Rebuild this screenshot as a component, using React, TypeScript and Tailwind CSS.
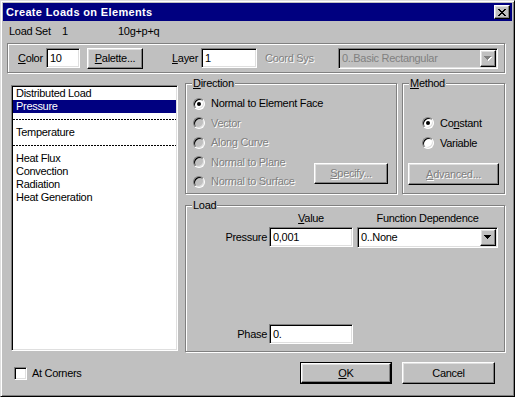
import type { ReactNode } from "react"

const raised =
    "border border-t-white border-l-white border-b-black border-r-black shadow-[inset_-1px_-1px_0_#808080,inset_1px_1px_0_#dfdfdf]"
const sunken =
    "border border-t-[#808080] border-l-[#808080] border-b-white border-r-white shadow-[inset_1px_1px_0_#000,inset_-1px_-1px_0_#dfdfdf]"
const grayText = "text-[#808080] [text-shadow:1px_1px_0_#fff]"

function Group({ label, className, children }: { label?: ReactNode; className?: string; children?: ReactNode }) {
    return (
        <div className={`relative border border-[#808080] shadow-[inset_1px_1px_0_#fff,1px_1px_0_#fff] ${className ?? ""}`}>
            {label && (
                <span className="absolute -top-[7px] left-[6px] bg-[#c0c0c0] px-[1px] leading-[13px]">{label}</span>
            )}
            {children}
        </div>
    )
}

function Radio({ checked, disabled }: { checked?: boolean; disabled?: boolean }) {
    return (
        <span
            className={`w-[12px] h-[12px] shrink-0 rounded-full flex items-center justify-center ${sunken} ${disabled ? "bg-[#c0c0c0]" : "bg-white"}`}
        >
            {checked && <span className="w-[4px] h-[4px] rounded-full bg-black" />}
        </span>
    )
}

function RadioRow({ label, checked, disabled, h = "h-[19.5px]" }: { label: ReactNode; checked?: boolean; disabled?: boolean; h?: string }) {
    return (
        <div className={`${h} flex items-center gap-[6px]`}>
            <Radio checked={checked} disabled={disabled} />
            <span className={disabled ? grayText : ""}>{label}</span>
        </div>
    )
}

function ArrowBtn({ disabled }: { disabled?: boolean }) {
    const d = "M0 0h7v1H0zM1 1h5v1H1zM2 2h3v1H2zM3 3h1v1H3z"
    return (
        <span className={`${raised} w-[16px] h-full shrink-0 bg-[#c0c0c0] flex items-center justify-center`}>
            <svg width="8" height="5" viewBox="0 0 8 5" shapeRendering="crispEdges">
                {disabled && <path d={d} fill="#fff" transform="translate(1 1)" />}
                <path d={d} fill={disabled ? "#808080" : "#000"} />
            </svg>
        </span>
    )
}

function Button({ children, className }: { children: ReactNode; className?: string }) {
    return (
        <div className={`${raised} bg-[#c0c0c0] flex items-center justify-center ${className ?? ""}`}>{children}</div>
    )
}

function Dashes() {
    return (
        <div className="h-[13px] flex items-center">
            <div className="w-full h-px bg-[repeating-linear-gradient(90deg,#000_0_2px,transparent_2px_3px)]" />
        </div>
    )
}

export default function App() {
    return (
        <div className="w-[515px] h-[397px] bg-[#c0c0c0] font-['Liberation_Sans',Arial,sans-serif] text-[11px] leading-[13px] tracking-[-0.3px] text-black whitespace-nowrap select-none">
            <div className="w-full h-full flex flex-col p-[2px] border border-t-[#dfdfdf] border-l-[#dfdfdf] border-b-black border-r-black shadow-[inset_1px_1px_0_#fff,inset_-1px_-1px_0_#808080]">
                {/* Title bar */}
                <div className="h-[18px] shrink-0 bg-[#000080] flex items-center pl-[3px] pr-[2px]">
                    <span className="flex-1 text-white font-bold tracking-[0.35px]">Create Loads on Elements</span>
                    <div className={`${raised} w-[16px] h-[14px] bg-[#c0c0c0] flex items-center justify-center`}>
                        <svg width="8" height="7" viewBox="0 0 8 7" shapeRendering="crispEdges">
                            <path
                                d="M0 0h2v1H0zM6 0h2v1H6zM1 1h2v1H1zM5 1h2v1H5zM2 2h4v1H2zM3 3h2v1H3zM2 4h4v1H2zM1 5h2v1H1zM5 5h2v1H5zM0 6h2v1H0zM6 6h2v1H6z"
                                fill="#000"
                            />
                        </svg>
                    </div>
                </div>

                <div className="flex flex-col pl-[4px]">
                    {/* Load set */}
                    <div className="mt-[4px] h-[13px] flex">
                        <span className="w-[55px] pl-[2px]">Load Set</span>
                        <span className="w-[56px]">1</span>
                        <span>10g+p+q</span>
                    </div>

                    {/* Color / layer */}
                    <Group className="mt-[5px] w-[498px] h-[30px] flex items-center pl-[10px]">
                        <span className="w-[28px]">
                            <u>C</u>olor
                        </span>
                        <div className={`${sunken} w-[34px] h-[20px] bg-white pl-[3px] flex items-center`}>10</div>
                        <Button className="ml-[7px] w-[56px] h-[21px]">
                            <span>
                                <u>P</u>alette...
                            </span>
                        </Button>
                        <span className="ml-[29px] w-[29px]">
                            <u>L</u>ayer
                        </span>
                        <div className={`${sunken} w-[56px] h-[20px] bg-white pl-[3px] flex items-center`}>1</div>
                        <span className={`ml-[8px] w-[73px] ${grayText}`}>Coord Sys</span>
                        <div className={`${sunken} w-[160px] h-[21px] bg-[#c0c0c0] flex p-[1px]`}>
                            <span className="flex-1 pl-[2px] flex items-center text-[#808080]">0..Basic Rectangular</span>
                            <ArrowBtn disabled />
                        </div>
                    </Group>

                    {/* Main area */}
                    <div className="mt-[10px] flex items-start">
                        <div className={`${sunken} ml-[4px] mt-[2px] w-[167px] h-[266px] bg-white p-[1px] flex flex-col`}>
                            <div className="h-[13px] pl-[3px]">Distributed Load</div>
                            <div className="h-[13px] pl-[3px] bg-[#000080] text-white">Pressure</div>
                            <Dashes />
                            <div className="h-[13px] pl-[3px]">Temperature</div>
                            <Dashes />
                            <div className="h-[13px] pl-[3px]">Heat Flux</div>
                            <div className="h-[13px] pl-[3px]">Convection</div>
                            <div className="h-[13px] pl-[3px]">Radiation</div>
                            <div className="h-[13px] pl-[3px]">Heat Generation</div>
                        </div>

                        <div className="ml-[7px] w-[320px] flex flex-col">
                            <div className="flex gap-[5px]">
                                <Group
                                    label={
                                        <>
                                            <u>D</u>irection
                                        </>
                                    }
                                    className="w-[212px] h-[111px] flex flex-col pt-[10px] pl-[7px] pr-[8px]"
                                >
                                    <RadioRow label="Normal to Element Face" checked />
                                    <RadioRow label="Vector" disabled />
                                    <RadioRow label="Along Curve" disabled />
                                    <div className="flex items-center">
                                        <div className="flex flex-col">
                                            <RadioRow label="Normal to Plane" disabled />
                                            <RadioRow label="Normal to Surface" disabled />
                                        </div>
                                        <Button className="ml-auto mt-[3px] w-[74px] h-[21px]">
                                            <span className={grayText}>
                                                <u>S</u>pecify...
                                            </span>
                                        </Button>
                                    </div>
                                </Group>

                                <Group
                                    label={
                                        <>
                                            <u>M</u>ethod
                                        </>
                                    }
                                    className="w-[103px] h-[111px] flex flex-col"
                                >
                                    <div className="pt-[29px] pl-[19px]">
                                        <RadioRow
                                            h="h-[20px]"
                                            checked
                                            label={
                                                <>
                                                    Co<u>n</u>stant
                                                </>
                                            }
                                        />
                                        <RadioRow h="h-[20px]" label="Variable" />
                                    </div>
                                    <Button className="mt-auto mb-[8px] ml-[5px] w-[91px] h-[22px]">
                                        <span className={grayText}>
                                            <u>A</u>dvanced...
                                        </span>
                                    </Button>
                                </Group>
                            </div>

                            <Group label="Load" className="mt-[11px] h-[147px] flex flex-col pt-[6px] pb-[7px]">
                                <div className="h-[13px] flex">
                                    <span className="w-[83px]" />
                                    <span className="w-[84px] text-center">
                                        <u>V</u>alue
                                    </span>
                                    <span className="ml-[4px] w-[141px] text-center">Function Dependence</span>
                                </div>
                                <div className="mt-[2px] flex items-start">
                                    <span className="w-[83px] h-[20px] pr-[2px] flex items-center justify-end">Pressure</span>
                                    <div className={`${sunken} w-[84px] h-[20px] bg-white pl-[3px] flex items-center`}>
                                        0,001
                                    </div>
                                    <div className={`${sunken} ml-[4px] w-[141px] h-[21px] bg-white flex p-[1px]`}>
                                        <span className="flex-1 pl-[2px] flex items-center">0..None</span>
                                        <ArrowBtn />
                                    </div>
                                </div>
                                <div className="mt-auto flex">
                                    <span className="w-[83px] h-[20px] pr-[2px] flex items-center justify-end">Phase</span>
                                    <div className={`${sunken} w-[84px] h-[20px] bg-white pl-[3px] flex items-center`}>0.</div>
                                </div>
                            </Group>
                        </div>
                    </div>

                    {/* Bottom */}
                    <div className="mt-[10px] h-[22px] flex items-center">
                        <span className={`${sunken} ml-[7px] w-[13px] h-[13px] bg-white`} />
                        <span className="ml-[5px]">At Corners</span>
                        <div className="ml-auto mr-[17px] flex gap-[10px]">
                            <div className="w-[92px] h-[22px] border border-black flex">
                                <Button className="flex-1">
                                    <span>
                                        <u>O</u>K
                                    </span>
                                </Button>
                            </div>
                            <Button className="w-[93px] h-[22px]">
                                <span>Cancel</span>
                            </Button>
                        </div>
                    </div>
                </div>
            </div>
        </div>
    )
}
